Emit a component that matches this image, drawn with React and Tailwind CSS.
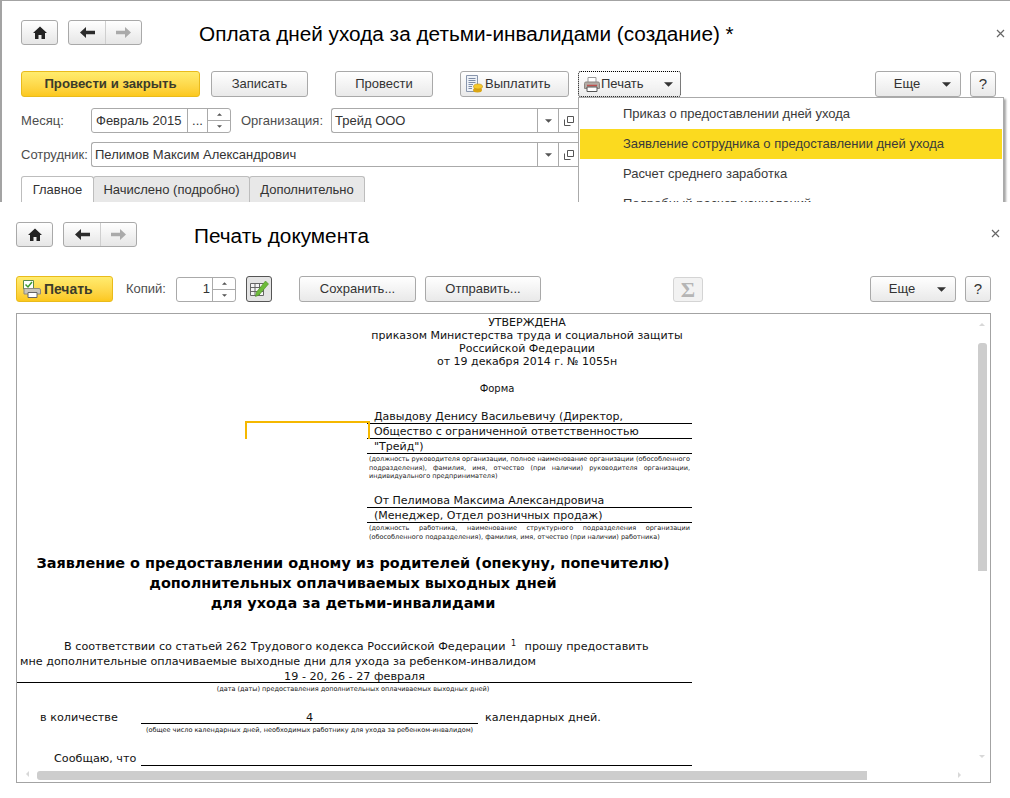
import React from 'react';

const Tri = ({ size = 'w-[9px] h-[5px]', down = true, color = '#333' }) => (
    <svg viewBox="0 0 10 5" className={size}>
        <path d={down ? 'M0 0H10L5 5Z' : 'M0 5H10L5 0Z'} fill={color} />
    </svg>
);

const HomeIcon = () => (
    <svg viewBox="0 0 14 13" className="w-[14px] h-[13px]">
        <path d="M7 0.5L14 7H12V13H8.5V9H5.5V13H2V7H0Z" fill="#222" />
    </svg>
);

const Arrow = ({ left, color }) => (
    <svg viewBox="0 0 15 11" className="w-[15px] h-[11px]">
        <path d={left ? 'M0 5.5L6 0V3.7H15V7.3H6V11Z' : 'M15 5.5L9 0V3.7H0V7.3H9V11Z'} fill={color} />
    </svg>
);

const CloseIcon = () => (
    <svg viewBox="0 0 9 9" className="w-[9px] h-[9px]">
        <path d="M1 1L8 8M8 1L1 8" stroke="#666" strokeWidth="1.2" />
    </svg>
);

const OpenIcon = () => (
    <svg viewBox="0 0 10 10" className="w-[10px] h-[10px]">
        <path d="M3.5 .5H9.5V6.5H3.5ZM.5 3.5V9.5H6.5" fill="none" stroke="#555" />
    </svg>
);

const PayIcon = () => (
    <svg viewBox="0 0 18 18" className="w-[18px] h-[18px]">
        <path d="M1.5 .5H12.5V16.5H1.5Z" fill="#eef2f8" stroke="#8a97ad" />
        <path d="M3.5 3.5H10.5M3.5 5.5H10.5M3.5 7.5H10.5M3.5 9.5H8M3.5 11.5H7M3.5 13.5H7" stroke="#7d8ca6" />
        <ellipse cx="12.5" cy="15" rx="4.5" ry="2.5" fill="#d9a514" />
        <ellipse cx="13" cy="11.5" rx="4.5" ry="2.5" fill="#f5c92c" stroke="#c58f0c" strokeWidth=".6" />
    </svg>
);

const PrinterIcon = () => (
    <svg viewBox="0 0 16 15" className="w-[16px] h-[15px]">
        <path d="M4 .5H12V6H4Z" fill="#fff" stroke="#999" />
        <path d="M.5 6.5Q.5 5 2 5H14Q15.5 5 15.5 6.5V11.5H.5Z" fill="#b3aca6" stroke="#8c8580" />
        <path d="M3 8.5H13" stroke="#c0504d" strokeWidth="1.5" />
        <path d="M3 10H13V14.5H3Z" fill="#fff" stroke="#555" />
    </svg>
);

const PrintCheckIcon = () => (
    <svg viewBox="0 0 18 18" className="w-[18px] h-[18px]">
        <path d="M.5 .5H10.5V9H.5Z" fill="#fff" stroke="#5b8a4a" />
        <path d="M2.5 4.5L5 7L9 2" fill="none" stroke="#3c9a2a" strokeWidth="1.5" />
        <path d="M1 8.5H16Q17.5 8.5 17.5 10V14H1Z" fill="#c9c6bd" stroke="#8d8a80" />
        <path d="M5 12.5H14V17.5H5Z" fill="#fff" stroke="#666" />
    </svg>
);

const TablePencilIcon = () => (
    <svg viewBox="0 0 19 18" className="w-[19px] h-[18px]">
        <path d="M.5 3.5H13.5V15.5H.5ZM.5 7.5H13.5M.5 11.5H13.5M5 3.5V15.5M9.5 3.5V15.5" fill="#f4f4f4" stroke="#666" />
        <path d="M15.5 1L18.5 4L9 15L5.5 16.5L6.5 12Z" fill="#6dbb3a" stroke="#4b8f24" strokeWidth=".6" />
    </svg>
);

const Btn = ({ w, children, className = '' }) => (
    <button
        type="button"
        className={`${w} h-[26px] shrink-0 flex items-center justify-center rounded-[3px] border border-[#a9a9a9] bg-gradient-to-b from-white to-[#e9e9e9] text-[13px] text-[#333] ${className}`}
    >
        {children}
    </button>
);

const YellowBtn = ({ className, children }) => (
    <button
        type="button"
        className={`h-[26px] shrink-0 flex items-center rounded-[3px] border border-[#e9bb1c] bg-gradient-to-b from-[#ffec6e] to-[#fcc81c] font-bold text-[#3b3b2a] ${className}`}
    >
        {children}
    </button>
);

const NavButtons = () => (
    <div className="flex gap-[10px]">
        <button type="button" className="w-[37px] h-[25px] flex items-center justify-center rounded-[3px] border border-[#a9a9a9] bg-gradient-to-b from-white to-[#e6e6e6]">
            <HomeIcon />
        </button>
        <div className="w-[74px] h-[25px] flex rounded-[3px] border border-[#a9a9a9] bg-gradient-to-b from-white to-[#e6e6e6]">
            <div className="w-[37px] flex items-center justify-center border-r border-[#cfcfcf]">
                <Arrow left color="#2b2b2b" />
            </div>
            <div className="flex-1 flex items-center justify-center">
                <Arrow color="#aaaaaa" />
            </div>
        </div>
    </div>
);

const Esche = ({ className = '' }) => (
    <Btn w="w-[86px]" className={`relative ${className}`}>
        <span className="mr-[22px]">Еще</span>
        <span className="absolute right-[9px] top-[10px] flex"><Tri /></span>
    </Btn>
);

const Cell = ({ w, children }) => (
    <div className={`${w} shrink-0 h-full flex items-center justify-center border-l border-[#aaa]`}>{children}</div>
);

const Spin = () => (
    <div className="w-[23px] shrink-0 h-full flex flex-col border-l border-[#aaa]">
        <div className="flex-1 flex items-center justify-center border-b border-[#aaa]">
            <Tri size="w-[5px] h-[3px]" down={false} color="#555" />
        </div>
        <div className="flex-1 flex items-center justify-center">
            <Tri size="w-[5px] h-[3px]" color="#555" />
        </div>
    </div>
);

const Field = ({ w, value }) => (
    <div className={`${w} h-[25px] shrink-0 flex items-center rounded-l-[3px] border border-r-0 border-[#aaa] bg-white text-[13px] text-[#333]`}>
        <span className="flex-1 pl-[3px]">{value}</span>
        <Cell w="w-[21px]"><Tri size="w-[7px] h-[4px]" color="#555" /></Cell>
        <Cell w="w-[20px]"><OpenIcon /></Cell>
    </div>
);

const Label = ({ w, children }) => (
    <span className={`${w} shrink-0 text-[13px] text-[#4d4d4d]`}>{children}</span>
);

const MenuItem = ({ active, children }) => (
    <div className={`h-[30px] flex items-center pl-[43px] text-[13px] text-[#3a3a3a] ${active ? 'bg-[#fbda1f]' : ''}`}>{children}</div>
);

const Tab = ({ w, active, children }) => (
    <div className={`${w} h-[27px] flex items-center justify-center rounded-t-[3px] border border-b-0 border-[#bdbdbd] text-[13px] text-[#333] ${active ? 'bg-white' : 'bg-[#e8e8e8] -ml-px'}`}>
        {children}
    </div>
);

const OrderWindow = () => (
    <div className="h-[202px] overflow-hidden border-t border-l-2 border-[#a3a3a3] pl-[19px] relative">
        <div className="flex items-start pt-[19px] h-[70px]">
            <NavButtons />
            <h1 className="ml-[57px] text-[20.75px] leading-[28px] text-black whitespace-nowrap">Оплата дней ухода за детьми-инвалидами (создание) *</h1>
            <span className="absolute left-[994px] top-[28px] flex"><CloseIcon /></span>
        </div>
        <div className="flex items-center">
            <YellowBtn className="w-[179px] justify-center text-[13.2px]">Провести и закрыть</YellowBtn>
            <Btn w="w-[97px]" className="ml-[11px]">Записать</Btn>
            <Btn w="w-[98px]" className="ml-[27px]">Провести</Btn>
            <Btn w="w-[109px]" className="ml-[27px] gap-[2px] !justify-start pl-[4px]"><PayIcon />Выплатить</Btn>
            <div className="relative ml-[9px]">
                <button type="button" className="w-[103px] h-[26px] flex items-center pl-[5px] rounded-[3px] border border-dotted border-black bg-gradient-to-b from-white to-[#ececec] text-[13px] text-[#333] gap-[1px]">
                    <PrinterIcon />Печать
                    <span className="ml-[19px] flex"><Tri /></span>
                </button>
                <div className="absolute z-10 left-0 top-[26px] w-[426px] h-[200px] border border-[#aaa] bg-white py-px px-px shadow-[2px_2px_2px_rgba(0,0,0,0.35)]">
                    <MenuItem>Приказ о предоставлении дней ухода</MenuItem>
                    <MenuItem active>Заявление сотрудника о предоставлении дней ухода</MenuItem>
                    <MenuItem>Расчет среднего заработка</MenuItem>
                    <MenuItem>Подробный расчет начислений</MenuItem>
                </div>
            </div>
            <Esche className="ml-[194px]" />
            <Btn w="w-[26px]" className="ml-[9px] text-[15px]">?</Btn>
        </div>
        <div className="flex items-center mt-[11px]">
            <Label w="w-[70px]">Месяц:</Label>
            <div className="w-[140px] h-[25px] shrink-0 flex items-center rounded-[3px] border border-[#aaa] text-[13px] text-[#333]">
                <span className="flex-1 pl-[4px] whitespace-nowrap">Февраль 2015</span>
                <Cell w="w-[20px]">...</Cell>
                <Spin />
            </div>
            <Label w="w-[100px] pl-[10px]">Организация:</Label>
            <Field w="w-[247px]" value="Трейд ООО" />
        </div>
        <div className="flex items-center mt-[9px]">
            <Label w="w-[70px]">Сотрудник:</Label>
            <Field w="w-[487px]" value="Пелимов Максим Александрович" />
        </div>
        <div className="flex mt-[9px]">
            <Tab w="w-[73px]" active>Главное</Tab>
            <Tab w="w-[157px]">Начислено (подробно)</Tab>
            <Tab w="w-[116px]">Дополнительно</Tab>
        </div>
    </div>
);

const Small = ({ children, last }) => (
    <div className={`h-[8.5px] leading-[8.5px] text-[6.5px] whitespace-nowrap text-[#222] ${last ? 'text-left' : '[text-align-last:justify]'}`}>{children}</div>
);

const Ruled = ({ children }) => (
    <div className="h-[15px] leading-[16px] border-b border-black pl-[7px] text-[11px] whitespace-nowrap">{children}</div>
);

const HeadLine = ({ children }) => (
    <div className="h-[20px] leading-[20px] text-center text-[14.45px] font-bold text-black whitespace-nowrap">{children}</div>
);

const DocPage = () => (
    <div className="w-[690px] pt-[2px] font-['DejaVu_Sans',sans-serif] text-[11.2px] text-[#111]">
        <div className="ml-[350px] w-[320px] text-center leading-[13px] text-[11px]">
            <div>УТВЕРЖДЕНА</div>
            <div>приказом Министерства труда и социальной защиты</div>
            <div>Российской Федерации</div>
            <div>от 19 декабря 2014 г. № 1055н</div>
            <div className="mt-[14px] w-[260px] text-[10px]">Форма</div>
        </div>
        <div className="ml-[350px] w-[325px] mt-[14px]">
            <Ruled>Давыдову Денису Васильевичу (Директор,</Ruled>
            <Ruled>Общество с ограниченной ответственностью</Ruled>
            <Ruled>"Трейд")</Ruled>
        </div>
        <div className="ml-[352px] w-[321px] mt-[1px]">
            <Small>(должность руководителя организации, полное наименование организации (обособленного</Small>
            <Small>подразделения), фамилия, имя, отчество (при наличии) руководителя организации,</Small>
            <Small last>индивидуального предпринимателя)</Small>
        </div>
        <div className="ml-[350px] w-[325px] mt-[12.5px]">
            <Ruled>От Пелимова Максима Александровича</Ruled>
            <Ruled>(Менеджер, Отдел розничных продаж)</Ruled>
        </div>
        <div className="ml-[352px] w-[321px] mt-[1px]">
            <Small>(должность работника, наименование структурного подразделения организации</Small>
            <Small last>(обособленного подразделения), фамилия, имя, отчество (при наличии) работника)</Small>
        </div>
        <div className="w-[672px] mt-[12px]">
            <HeadLine>Заявление о предоставлении одному из родителей (опекуну, попечителю)</HeadLine>
            <HeadLine>дополнительных оплачиваемых выходных дней</HeadLine>
            <HeadLine>для ухода за детьми-инвалидами</HeadLine>
        </div>
        <div className="mt-[26px] pl-[47px] h-[15px] leading-[15px] whitespace-nowrap">
            В соответствии со статьей 262 Трудового кодекса Российской Федерации <sup className="text-[8px] ml-[2px] mr-[5px]">1</sup> прошу предоставить
        </div>
        <div className="pl-[3px] h-[15px] leading-[15px] whitespace-nowrap">мне дополнительные оплачиваемые выходные дни для ухода за ребенком-инвалидом</div>
        <div className="w-[675px] h-[14px] leading-[16px] border-b border-black text-center">19 - 20, 26 - 27 февраля</div>
        <div className="w-[672px] h-[12px] leading-[13px] text-center text-[6.5px]">(дата (даты) предоставления дополнительных оплачиваемых выходных дней)</div>
        <div className="mt-[14px] flex h-[15px] leading-[18px] whitespace-nowrap">
            <span className="w-[124px] pl-[23px]">в количестве</span>
            <span className="w-[337px] border-b border-black text-center">4</span>
            <span className="pl-[7px]">календарных дней.</span>
        </div>
        <div className="ml-[124px] w-[337px] h-[11px] leading-[12px] text-center text-[6.5px] whitespace-nowrap">(общее число календарных дней, необходимых работнику для ухода за ребенком-инвалидом)</div>
        <div className="mt-[16px] flex h-[15px] leading-[16px] whitespace-nowrap">
            <span className="w-[124px] pl-[37px]">Сообщаю, что</span>
            <span className="w-[551px] border-b border-black"></span>
        </div>
    </div>
);

const DocPanel = () => (
    <div className="relative mt-[11px] w-[975px] h-[470px] border border-[#a3a3a3] overflow-hidden">
        <DocPage />
        {/* selected area of the spreadsheet */}
        <div className="absolute left-[228px] top-[107px] w-[125px] h-[18px] border-2 border-b-0 border-[#f5b800]"></div>
        <span className="absolute left-[962px] top-[9px] flex"><Tri size="w-[6px] h-[3px]" down={false} color="#d8d8d8" /></span>
        <div className="absolute left-[961px] top-[29px] w-[9px] h-[228px] rounded-t-[3px] bg-[#cdcdcd]"></div>
        <span className="absolute left-[962px] top-[441px] flex"><Tri size="w-[6px] h-[3px]" color="#d8d8d8" /></span>
        <span className="absolute left-[9px] top-[457px] w-0 h-0 border-y-[3px] border-r-[3px] border-y-transparent border-r-[#d8d8d8]"></span>
        <div className="absolute left-[20px] top-[457px] w-[830px] h-[9px] rounded-l-[3px] bg-[#cdcdcd]"></div>
        <span className="absolute left-[941px] top-[458px] w-0 h-0 border-y-[3px] border-l-[3px] border-y-transparent border-l-[#d8d8d8]"></span>
    </div>
);

const PrintWindow = () => (
    <div className="h-[596px] pl-[16px] bg-white relative">
        <div className="flex items-start pt-[20px] h-[74px]">
            <NavButtons />
            <h2 className="ml-[57px] text-[20.75px] leading-[27px] text-black">Печать документа</h2>
            <span className="absolute left-[991px] top-[27px] flex"><CloseIcon /></span>
        </div>
        <div className="flex items-center">
            <YellowBtn className="w-[97px] pl-[6px] gap-[3px] text-[13.9px]"><PrintCheckIcon />Печать</YellowBtn>
            <Label w="w-[50px] ml-[13px]">Копий:</Label>
            <div className="w-[60px] h-[25px] shrink-0 flex items-center rounded-[3px] border border-[#aaa] text-[13px] text-[#333]">
                <span className="flex-1 text-right pr-[2px]">1</span>
                <Spin />
            </div>
            <button type="button" className="ml-[10px] w-[26px] h-[26px] shrink-0 flex items-center justify-center rounded-[3px] border border-[#555] bg-[#e4e4e4]">
                <TablePencilIcon />
            </button>
            <Btn w="w-[117px]" className="ml-[27px]">Сохранить...</Btn>
            <Btn w="w-[116px]" className="ml-[9px]">Отправить...</Btn>
            <div className="ml-[132px] w-[30px] h-[25px] shrink-0 flex items-center justify-center rounded-[3px] border border-[#d4d4d4] bg-[#f2f2f2] font-['Liberation_Serif',serif] text-[22px] font-bold text-[#b5b5b5]">Σ</div>
            <Esche className="ml-[167px]" />
            <Btn w="w-[26px]" className="ml-[9px] text-[15px]">?</Btn>
        </div>
        <DocPanel />
    </div>
);

export default function App() {
    return (
        <div className="w-[1010px] h-[798px] overflow-hidden bg-white font-['Liberation_Sans',Arial,sans-serif]">
            <OrderWindow />
            <PrintWindow />
        </div>
    );
}
